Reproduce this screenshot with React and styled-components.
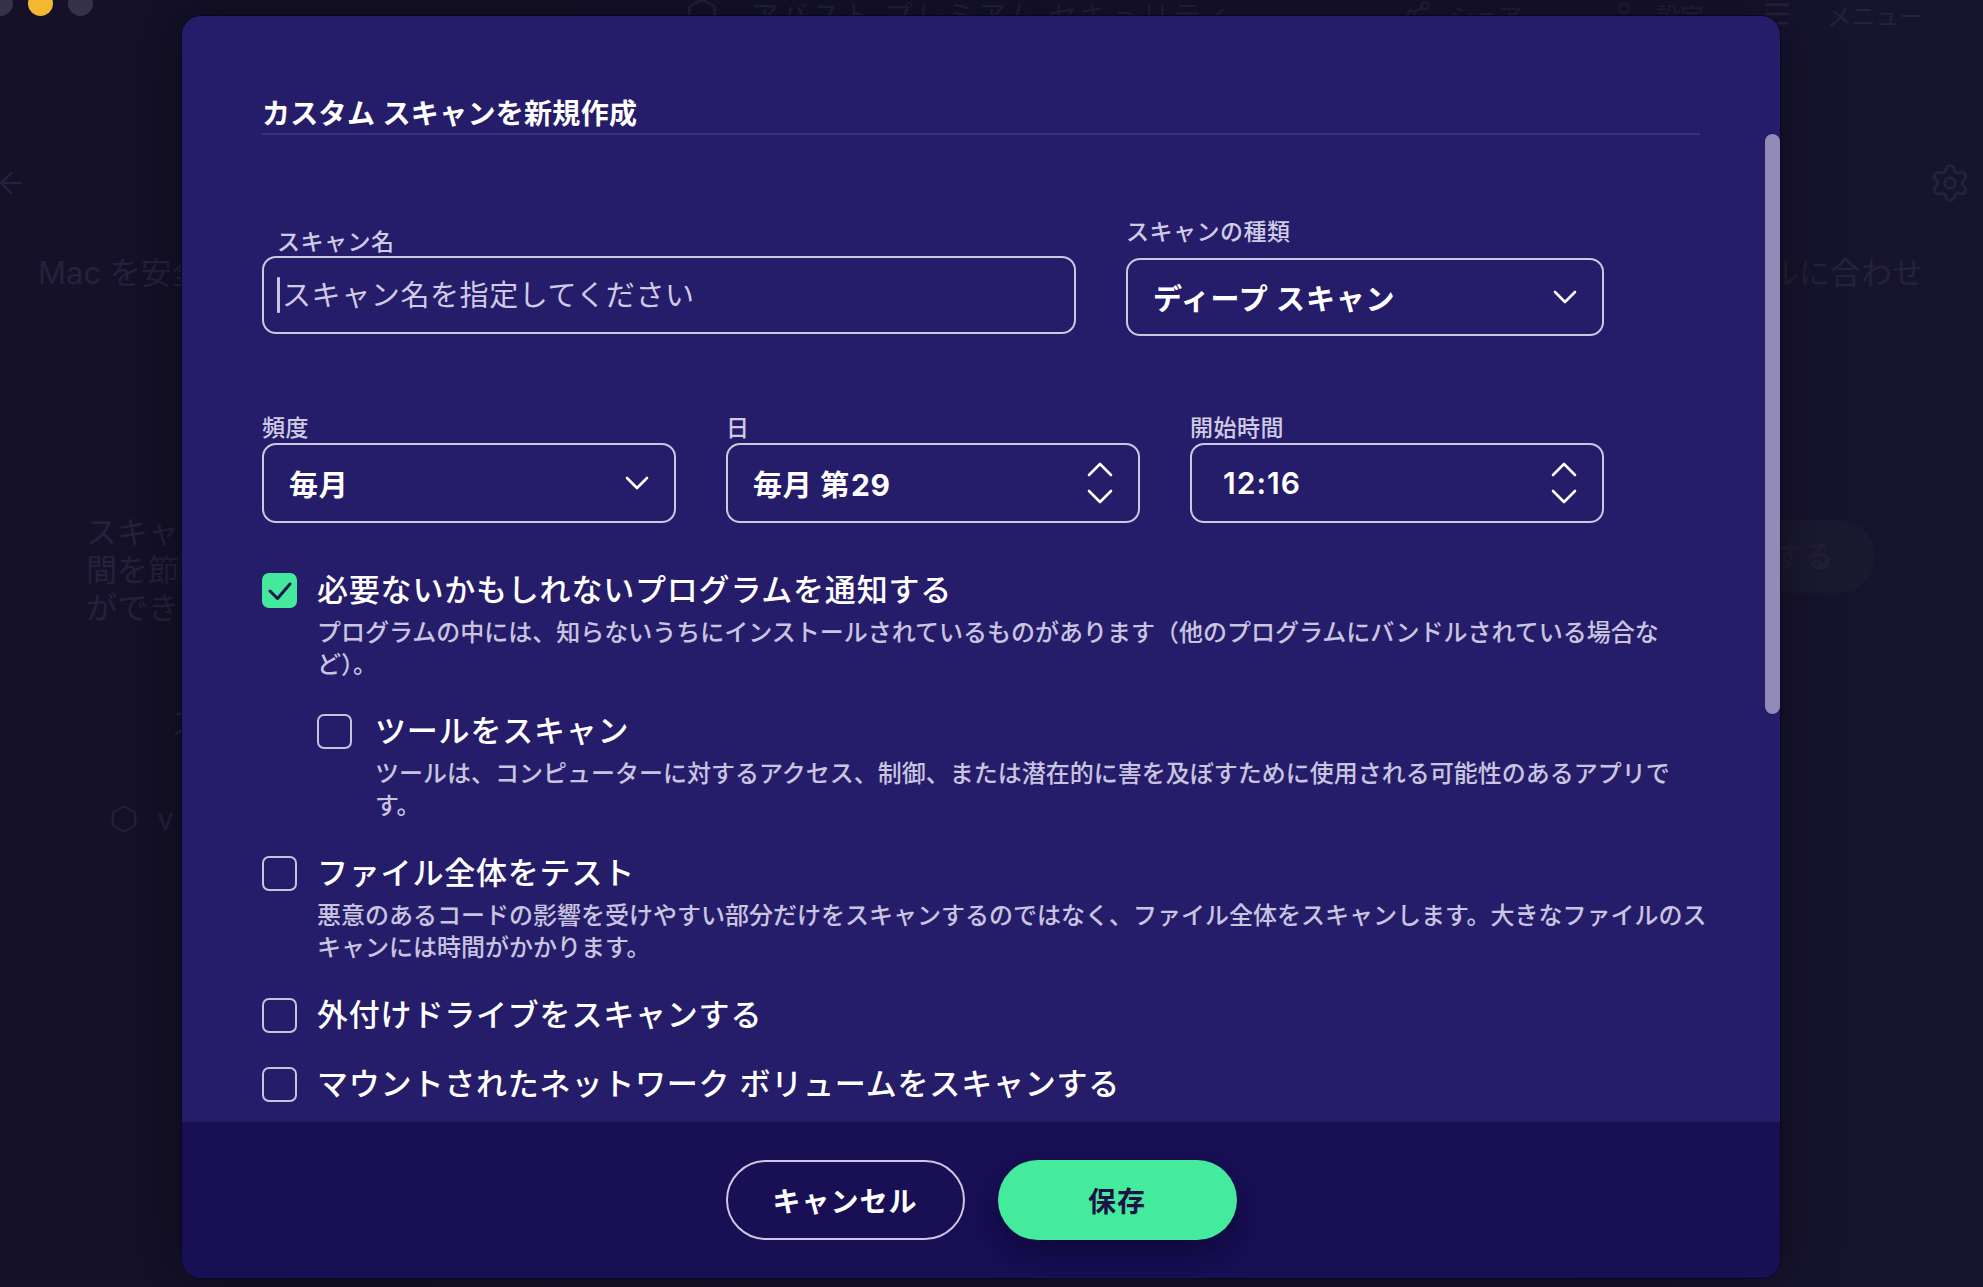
import React from 'react';
import styled, { createGlobalStyle } from 'styled-components';
import { ArrowLeft, Settings, Menu, Share2, User, Hexagon } from 'lucide-react';

const GlobalStyle = createGlobalStyle`
  html, body {
    margin: 0;
    padding: 0;
    height: 100%;
    overflow: hidden;
    background: #151229;
  }
  body {
    font-family: Inter, "Noto Sans CJK JP", sans-serif;
    -webkit-font-smoothing: antialiased;
  }
  #root {
    height: 100%;
  }
  * {
    box-sizing: border-box;
  }
`;

// 設定項目
const options = [
  {
    id: 'pup',
    checked: true,
    title: '必要ないかもしれないプログラムを通知する',
    desc: [
      'プログラムの中には、知らないうちにインストールされているものがあります（他のプログラムにバンドルされている場合な',
      'ど）。',
    ],
    children: [
      {
        id: 'tools',
        title: 'ツールをスキャン',
        desc: [
          'ツールは、コンピューターに対するアクセス、制御、または潜在的に害を及ぼすために使用される可能性のあるアプリで',
          'す。',
        ],
      },
    ],
  },
  {
    id: 'full',
    title: 'ファイル全体をテスト',
    desc: [
      '悪意のあるコードの影響を受けやすい部分だけをスキャンするのではなく、ファイル全体をスキャンします。大きなファイルのス',
      'キャンには時間がかかります。',
    ],
  },
  { id: 'ext', title: '外付けドライブをスキャンする' },
  { id: 'net', title: 'マウントされたネットワーク ボリュームをスキャンする' },
];

const ChevronDown = () => (
  <svg width="24" height="14" viewBox="0 0 24 14" fill="none">
    <path d="M2 2l10 10L22 2" stroke="#fff" strokeWidth="2.6" strokeLinecap="round" strokeLinejoin="round" />
  </svg>
);

const Stepper = () => (
  <svg width="26" height="42" viewBox="0 0 26 42" fill="none">
    <path d="M2 13L13 2l11 11" stroke="#fff" strokeWidth="2.6" strokeLinecap="round" strokeLinejoin="round" />
    <path d="M2 29l11 11 11-11" stroke="#fff" strokeWidth="2.6" strokeLinecap="round" strokeLinejoin="round" />
  </svg>
);

const CheckIcon = () => (
  <svg width="35" height="35" viewBox="0 0 35 35" fill="none">
    <path d="M8 18l7.5 7.5L28 11" stroke="#1b1450" strokeWidth="3" strokeLinecap="round" strokeLinejoin="round" />
  </svg>
);

const Option = ({ item, nested }) => (
  <OptionRow $nested={nested}>
    <CheckBox $checked={item.checked}>{item.checked && <CheckIcon />}</CheckBox>
    <OptionBody>
      <OptionTitle>{item.title}</OptionTitle>
      {item.desc && (
        <OptionDesc>
          {item.desc.map(line => (
            <span key={line}>{line}</span>
          ))}
        </OptionDesc>
      )}
      {item.children &&
        item.children.map(child => <Option key={child.id} item={child} nested />)}
    </OptionBody>
  </OptionRow>
);

const App = () => {
  return (
    <Page>
      <GlobalStyle />
      <Backdrop>
        <TopBar>
          <Lights>
            <Light />
            <Light $color="#f4b731" />
            <Light />
          </Lights>
          <TopCenter>
            <TopItem $gap="32px">
              <Hexagon size={34} strokeWidth={2} />
              <TopTitle>アバスト プレミアム セキュリティ</TopTitle>
            </TopItem>
            <TopItem $space="171px">
              <Share2 size={28} strokeWidth={2} />
              シェア
            </TopItem>
            <TopItem $space="88px">
              <User size={28} strokeWidth={2} />
              設定
            </TopItem>
          </TopCenter>
          <TopItem $gap="34px">
            <Menu size={32} strokeWidth={2} />
            メニュー
          </TopItem>
        </TopBar>
        <NavRow>
          <ArrowLeft size={34} strokeWidth={1.6} />
          <Settings size={42} strokeWidth={1.6} />
        </NavRow>
        <HeadRow>
          <span>Mac を安全</span>
          <span>ールに合わせ</span>
        </HeadRow>
        <InfoRow>
          <InfoText>
            スキャン
            <br />
            間を節約
            <br />
            ができ
          </InfoText>
          <GhostButton>スキャンを作成する</GhostButton>
        </InfoRow>
        <GhostList>
          <span>スキャ</span>
          <GhostItem>
            <Hexagon size={30} strokeWidth={1.6} />
            <span>v</span>
          </GhostItem>
        </GhostList>
      </Backdrop>

      <Modal>
        <Body>
          <Title>カスタム スキャンを新規作成</Title>

          <FieldRow>
            <Field $width="814px">
              <FieldLabel $indent="15px" $top="10px" $gap="0">
                スキャン名
              </FieldLabel>
              <TextBox>
                <Caret />
                <NameInput placeholder="スキャン名を指定してください" readOnly />
              </TextBox>
            </Field>
            <Field $width="478px">
              <FieldLabel $gap="12px">スキャンの種類</FieldLabel>
              <SelectBox $height="78px">
                <Value>ディープ スキャン</Value>
                <ChevronDown />
              </SelectBox>
            </Field>
          </FieldRow>

          <ScheduleRow>
            <Field>
              <FieldLabel $gap="1px">頻度</FieldLabel>
              <SelectBox>
                <Value>毎月</Value>
                <ChevronDown />
              </SelectBox>
            </Field>
            <Field>
              <FieldLabel $gap="1px">日</FieldLabel>
              <SelectBox>
                <Value>
                  毎月 第<Num>29</Num>
                </Value>
                <Stepper />
              </SelectBox>
            </Field>
            <Field>
              <FieldLabel $gap="1px">開始時間</FieldLabel>
              <SelectBox>
                <Value>
                  <Num $big>12:16</Num>
                </Value>
                <Stepper />
              </SelectBox>
            </Field>
          </ScheduleRow>

          <OptionList>
            {options.map(item => (
              <Option key={item.id} item={item} />
            ))}
          </OptionList>
        </Body>
        <ScrollThumb />
        <Footer>
          <CancelBtn>キャンセル</CancelBtn>
          <SaveBtn>保存</SaveBtn>
        </Footer>
      </Modal>
    </Page>
  );
};

export default App;

const Page = styled.div`
  position: relative;
  width: 1983px;
  height: 1287px;
  overflow: hidden;
  background: linear-gradient(90deg, #141128 0%, #16132d 60%, #17142f 100%);
`;

/* 背景のアプリ画面（ぼかし） */
const Backdrop = styled.div`
  display: flex;
  flex-direction: column;
  height: 100%;
  color: #25223c;
  font-family: Inter, "Noto Sans CJK JP", sans-serif;
`;

const TopBar = styled.div`
  display: flex;
  align-items: center;
  height: 28px;
  padding-right: 60px;
  font-size: 24px;
`;

const Lights = styled.div`
  display: flex;
  gap: 15px;
  margin-left: -12px;
  margin-top: -22px;
`;

const Light = styled.span`
  width: 25px;
  height: 25px;
  border-radius: 50%;
  background: ${props => props.$color || '#35334a'};
`;

const TopCenter = styled.div`
  display: flex;
  align-items: center;
  margin-left: auto;
  margin-right: 57px;
`;

const TopItem = styled.span`
  display: flex;
  align-items: center;
  gap: ${props => props.$gap || '18px'};
  margin-left: ${props => props.$space || '0'};
  white-space: nowrap;
`;

const TopTitle = styled.span`
  font-size: 28px;
  letter-spacing: 3px;
`;

const NavRow = styled.div`
  display: flex;
  justify-content: space-between;
  align-items: center;
  height: 42px;
  margin-top: 134px;
  padding: 0 12px 0 0;
  margin-left: -6px;
`;

const HeadRow = styled.div`
  display: flex;
  justify-content: space-between;
  margin-top: 49px;
  padding: 0 60px 0 38px;
  font-size: 31px;
  line-height: 40px;
`;

const InfoRow = styled.div`
  display: flex;
  justify-content: space-between;
  align-items: flex-start;
  margin-top: 220px;
  padding: 0 108px 0 86px;
`;

const InfoText = styled.div`
  font-size: 31px;
  line-height: 38px;
`;

const GhostButton = styled.div`
  margin-top: 7px;
  height: 73px;
  padding: 0 42px;
  border-radius: 37px;
  background: #1a1930;
  color: #211e36;
  font-size: 30px;
  font-weight: 700;
  line-height: 73px;
`;

const GhostList = styled.div`
  display: flex;
  flex-direction: column;
  gap: 58px;
  margin-top: 72px;
  padding-left: 171px;
  font-size: 30px;
`;

const GhostItem = styled.div`
  display: flex;
  align-items: center;
  gap: 18px;
  margin-left: -62px;
`;

/* モーダル */
const Modal = styled.div`
  position: absolute;
  left: 181px;
  top: 15px;
  width: 1600px;
  height: 1264px;
  display: flex;
  flex-direction: column;
  overflow: hidden;
  border: 1px solid #0a0820;
  border-radius: 20px;
  background: #261d6a;
  box-shadow: 0 0 60px rgba(0, 0, 0, 0.45);
  color: #fff;
`;

const Body = styled.div`
  flex: 1;
  overflow: hidden;
  padding: 81px 80px 0 80px;
`;

const Title = styled.h1`
  margin: 0;
  padding-bottom: 2px;
  border-bottom: 2px solid #3a3180;
  font-size: 28px;
  font-weight: 600;
  line-height: 34px;
  letter-spacing: 0.3px;
  color: #fff;
`;

const FieldRow = styled.div`
  display: flex;
  align-items: flex-start;
  gap: 50px;
  margin-top: 83px;
`;

const ScheduleRow = styled.div`
  display: grid;
  grid-template-columns: repeat(3, 414px);
  gap: 50px;
  margin-top: 78px;
`;

const Field = styled.div`
  display: flex;
  flex-direction: column;
  width: ${props => props.$width || 'auto'};
`;

const FieldLabel = styled.label`
  margin-top: ${props => props.$top || '0'};
  margin-bottom: ${props => props.$gap || '0'};
  padding-left: ${props => props.$indent || '0'};
  font-size: 23px;
  font-weight: 500;
  line-height: 28px;
  letter-spacing: 0.5px;
  color: #d0cbe5;
`;

const TextBox = styled.div`
  display: flex;
  align-items: center;
  height: 78px;
  padding-left: 13px;
  border: 2px solid #cdc8e2;
  border-radius: 14px;
`;

const Caret = styled.span`
  flex: none;
  width: 3px;
  height: 36px;
  margin-right: 2px;
  border-radius: 1px;
  background: #c9c4df;
`;

const NameInput = styled.input`
  flex: 1;
  min-width: 0;
  padding: 0;
  border: none;
  outline: none;
  background: transparent;
  font-family: inherit;
  font-size: 29px;
  letter-spacing: 0.6px;
  color: #fff;

  &::placeholder {
    color: #d0cbe5;
  }
`;

const SelectBox = styled.div`
  display: flex;
  align-items: center;
  justify-content: space-between;
  height: ${props => props.$height || '80px'};
  padding: 0 25px 0 25px;
  border: 2px solid #cdc8e2;
  border-radius: 14px;
  cursor: pointer;
`;

const Value = styled.span`
  font-size: 29px;
  font-weight: 700;
  letter-spacing: 0.8px;
  color: #fff;
`;

const Num = styled.span`
  font-family: Inter, sans-serif;
  font-size: 30px;
  font-weight: ${props => (props.$big ? 600 : 700)};
  letter-spacing: ${props => (props.$big ? '1px' : '0.5px')};
  margin-left: ${props => (props.$big ? '6px' : '1px')};
`;

const OptionList = styled.div`
  display: flex;
  flex-direction: column;
  gap: 33px;
  margin-top: 49px;
`;

const OptionRow = styled.div`
  display: flex;
  align-items: flex-start;
  gap: ${props => (props.$nested ? '23px' : '20px')};
  margin-top: ${props => (props.$nested ? '32px' : '0')};
`;

const CheckBox = styled.span`
  flex: none;
  display: flex;
  width: 35px;
  height: 35px;
  margin-top: 0.5px;
  border-radius: 7px;
  border: ${props => (props.$checked ? 'none' : '2.5px solid #c7c2dd')};
  background: ${props => (props.$checked ? '#44e99c' : 'transparent')};
`;

const OptionBody = styled.div`
  display: flex;
  flex-direction: column;
`;

const OptionTitle = styled.span`
  font-size: 31px;
  font-weight: 500;
  line-height: 36px;
  letter-spacing: 0.8px;
  color: #fff;
  white-space: nowrap;
`;

const OptionDesc = styled.p`
  display: flex;
  flex-direction: column;
  margin: 9px 0 0;
  font-size: 24px;
  font-weight: 500;
  line-height: 32px;
  color: #c9c4e0;
  white-space: nowrap;
`;

const ScrollThumb = styled.div`
  position: absolute;
  top: 118px;
  right: 0;
  width: 15px;
  height: 580px;
  border-radius: 8px;
  background: #928bb8;
`;

const Footer = styled.div`
  flex: none;
  display: flex;
  justify-content: center;
  align-items: center;
  gap: 33px;
  height: 157px;
  border-top: 1px solid #231b63;
  background: #180f55;
`;

const CancelBtn = styled.button`
  width: 239px;
  height: 80px;
  border: 2px solid #cdc7e3;
  border-radius: 40px;
  background: transparent;
  color: #fff;
  font-family: inherit;
  font-size: 28px;
  font-weight: 700;
  letter-spacing: 1px;

  &:hover {
    cursor: pointer;
  }
`;

const SaveBtn = styled(CancelBtn)`
  border: none;
  background: #45eb9c;
  color: #1b1347;
  box-shadow: 0 14px 32px rgba(8, 4, 40, 0.55);
`;
